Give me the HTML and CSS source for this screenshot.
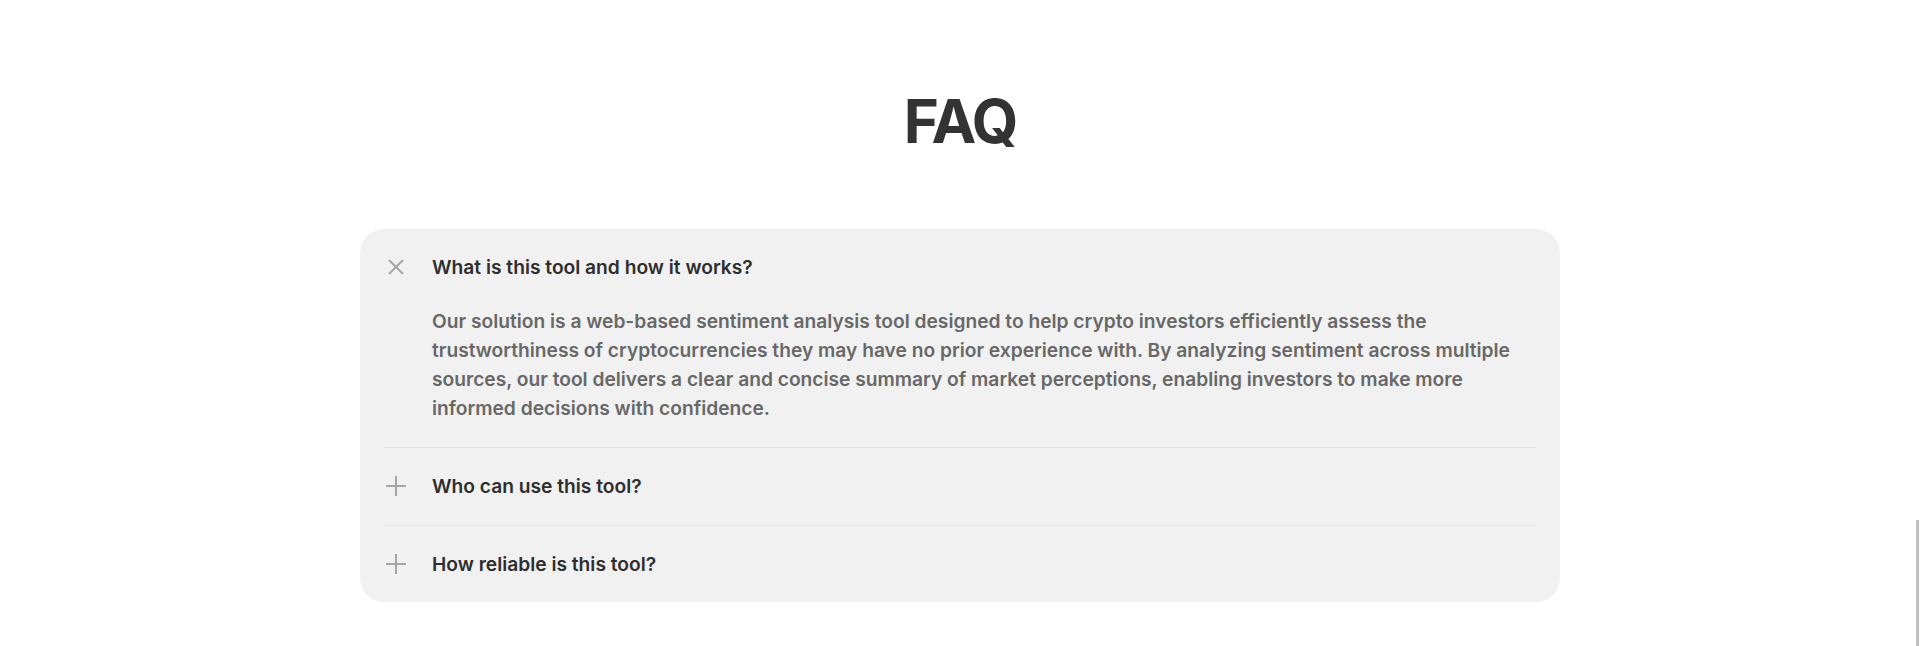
FILE: index.html
```html
<!DOCTYPE html>
<html lang="en">
<head>
<meta charset="utf-8">
<title>FAQ</title>
<link rel="stylesheet" href="styles.css">
</head>
<body>
<section class="faq">
  <h2 class="faq-title">FAQ</h2>
  <div class="faq-card">
    <div class="faq-item open">
      <div class="faq-q">
        <span class="faq-icon icon-close"><svg width="20" height="20" viewBox="0 0 20 20"><path d="M10 0v20M0 10h20" stroke="#a5a5a5" stroke-width="2" fill="none"/></svg></span>
        <span class="faq-q-text">What is this tool and how it works?</span>
      </div>
      <p class="faq-a">Our solution is a web-based sentiment analysis tool designed to help crypto investors efficiently assess the trustworthiness of cryptocurrencies they may have no prior experience with. By analyzing sentiment across multiple sources, our tool delivers a clear and concise summary of market perceptions, enabling investors to make more informed decisions with confidence.</p>
    </div>
    <div class="faq-item">
      <div class="faq-q">
        <span class="faq-icon"><svg width="20" height="20" viewBox="0 0 20 20"><path d="M10 0v20M0 10h20" stroke="#a5a5a5" stroke-width="2" fill="none"/></svg></span>
        <span class="faq-q-text">Who can use this tool?</span>
      </div>
    </div>
    <div class="faq-item">
      <div class="faq-q">
        <span class="faq-icon"><svg width="20" height="20" viewBox="0 0 20 20"><path d="M10 0v20M0 10h20" stroke="#a5a5a5" stroke-width="2" fill="none"/></svg></span>
        <span class="faq-q-text">How reliable is this tool?</span>
      </div>
    </div>
  </div>
</section>
<div class="scroll-thumb"></div>
</body>
</html>
```

FILE: styles.css
```css
html, body {
  margin: 0;
  padding: 0;
  background: #ffffff;
  font-family: Inter, "Noto Sans", "Liberation Sans", sans-serif;
}

.faq {
  padding-top: 85px;
  display: flex;
  flex-direction: column;
  align-items: center;
}

.faq-title {
  margin: 0 0 72px;
  font-size: 60px;
  line-height: 72px;
  font-weight: 700;
  color: #333333;
  letter-spacing: -2px;
}

.faq-card {
  width: 1200px;
  box-sizing: border-box;
  background: #f1f1f1;
  border-radius: 24px;
  padding: 0 24px;
}

.faq-item {
  padding: 24px 0;
  border-top: 1px solid #e2e2e2;
}

.faq-item:first-child {
  border-top: none;
}

.faq-q {
  display: flex;
  align-items: center;
  gap: 24px;
}

.faq-icon {
  width: 24px;
  height: 28px;
  display: flex;
  align-items: center;
  justify-content: center;
  flex: none;
}

.faq-icon svg {
  display: block;
}

.icon-close svg {
  transform: rotate(45deg);
}

.faq-q-text {
  font-size: 19.2px;
  line-height: 28.8px;
  font-weight: 600;
  color: #2e2e2e;
}

.faq-a {
  margin: 25px 0 0 48px;
  font-size: 19.2px;
  line-height: 29px;
  font-weight: 600;
  color: #686868;
  max-width: 1104px;
}

.scroll-thumb {
  position: fixed;
  right: 1px;
  top: 520px;
  bottom: 0;
  width: 3px;
  background: #c0c0c0;
}
```
